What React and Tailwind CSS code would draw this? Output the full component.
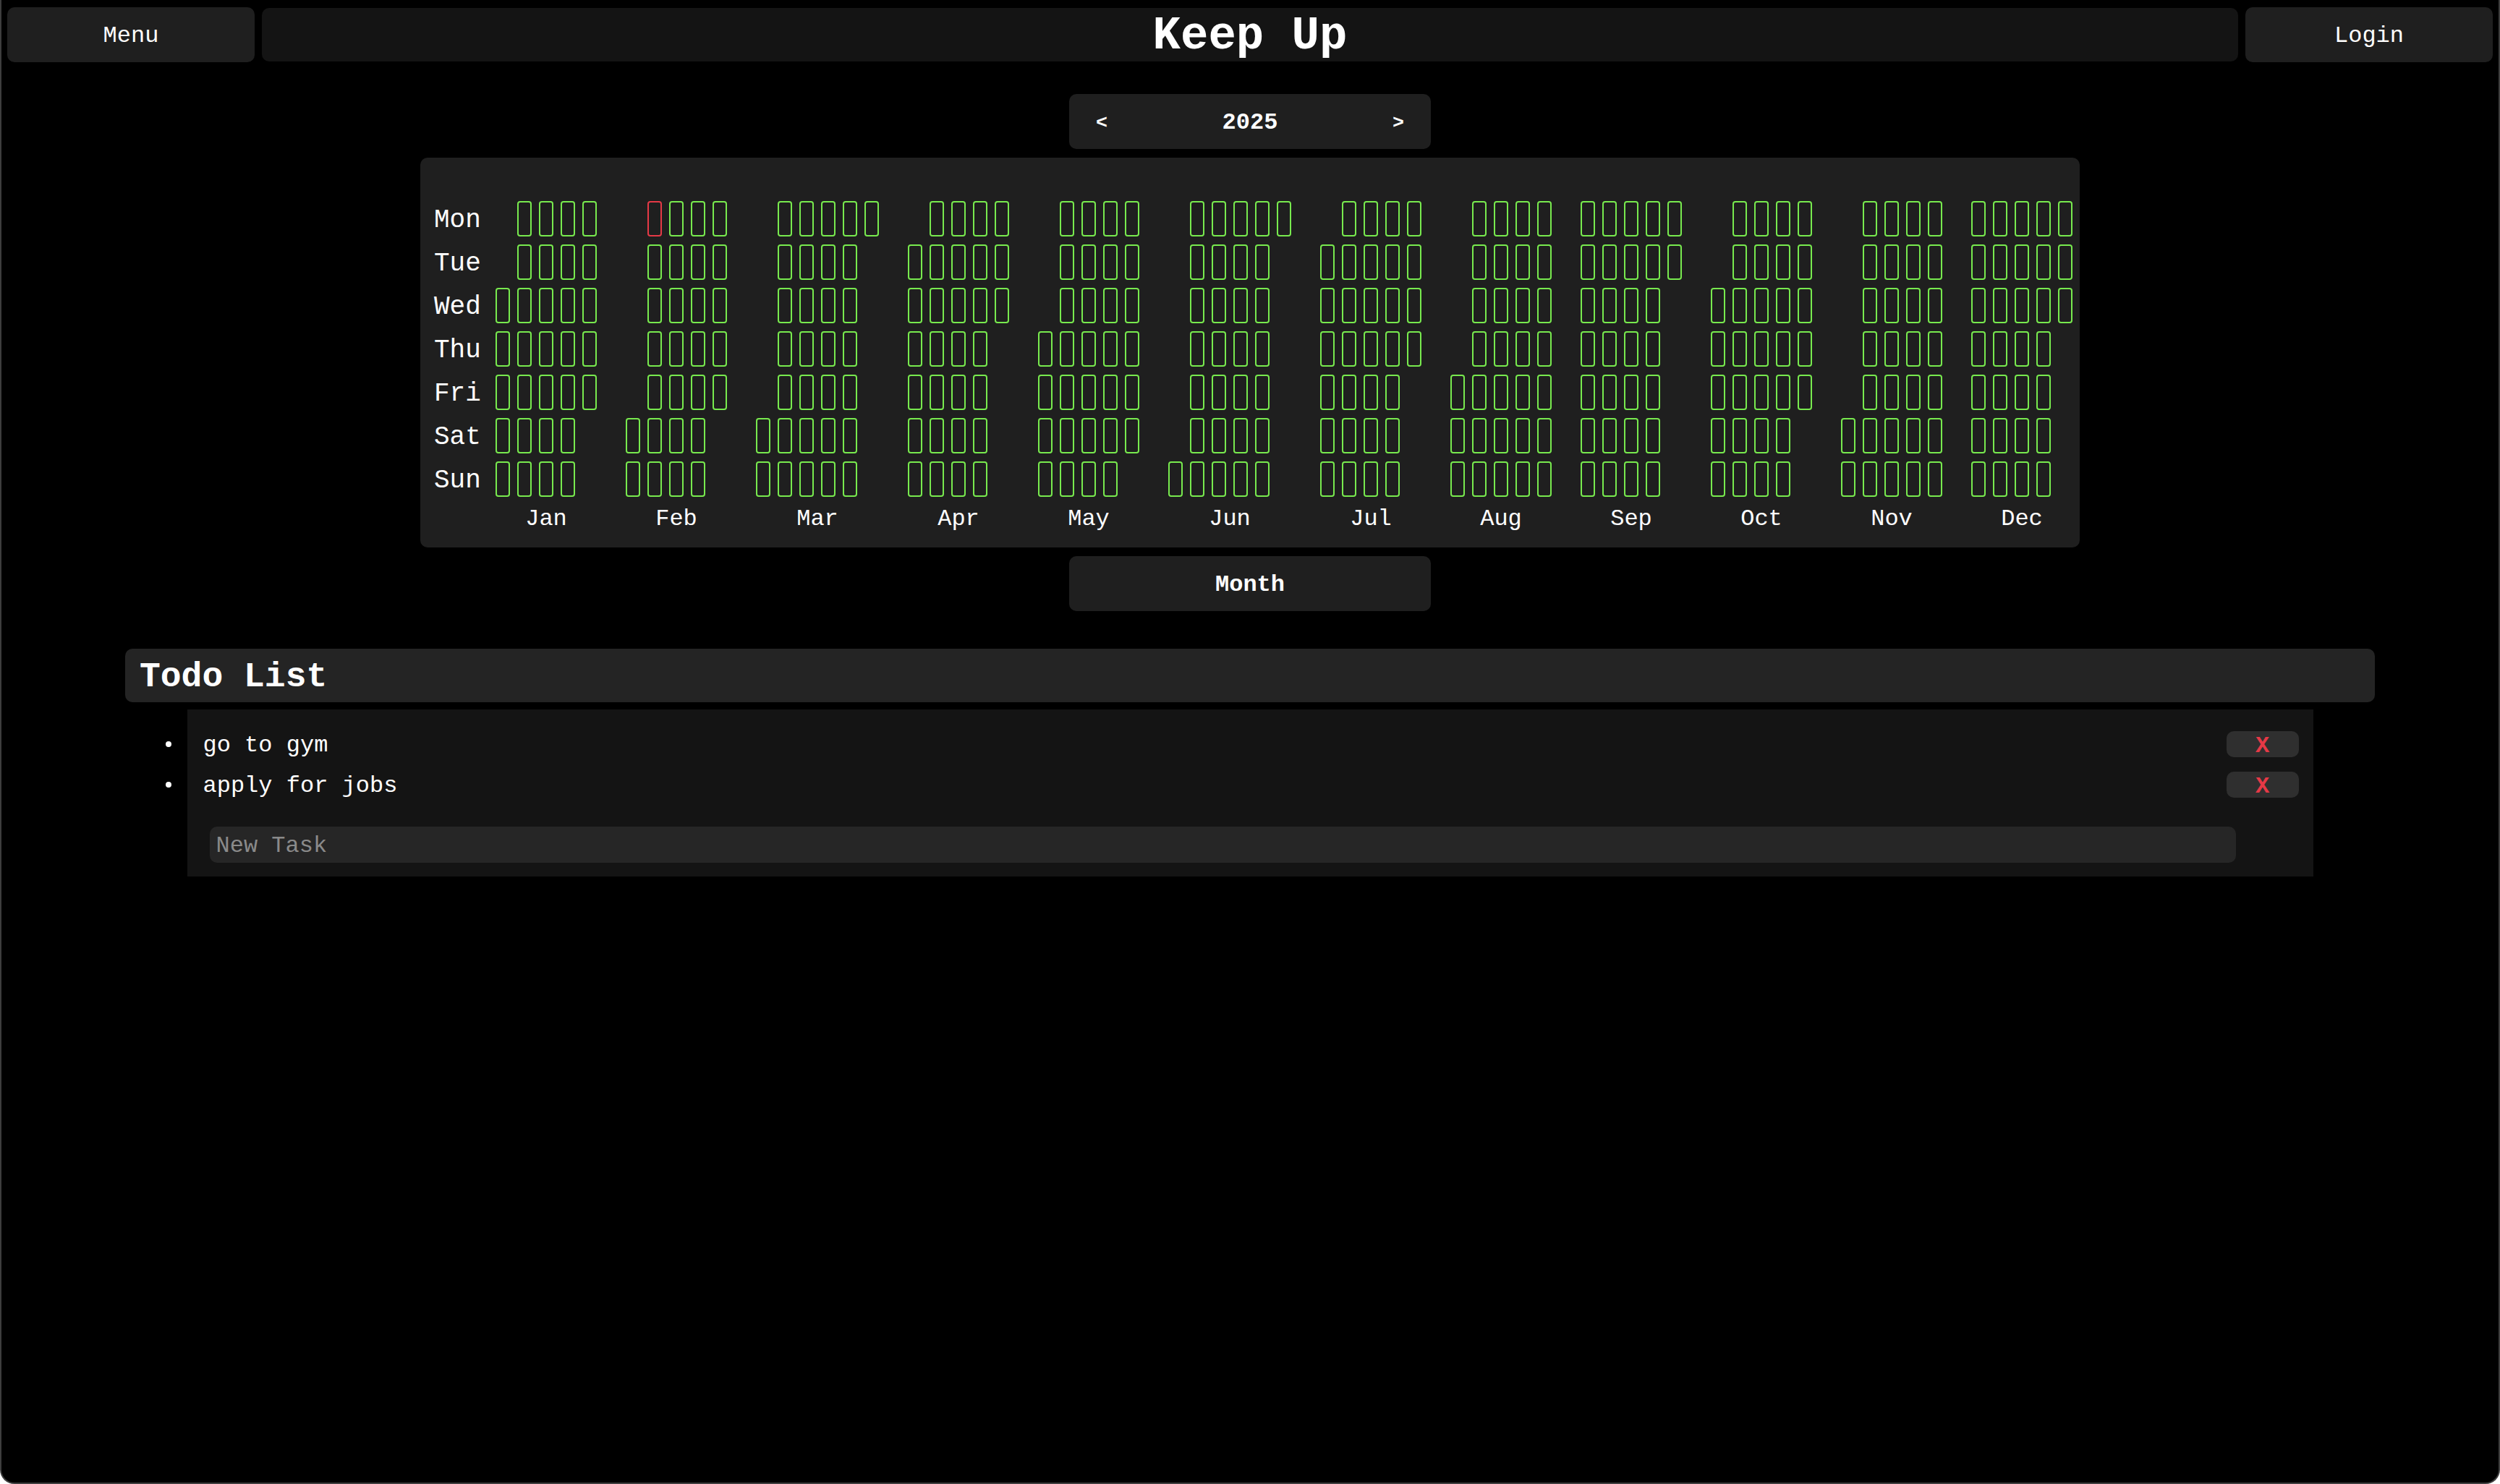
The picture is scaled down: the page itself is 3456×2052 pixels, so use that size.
import React from 'react';

const YEAR = 2025;
const MONTHS = ['Jan', 'Feb', 'Mar', 'Apr', 'May', 'Jun', 'Jul', 'Aug', 'Sep', 'Oct', 'Nov', 'Dec'];
const DAYS = ['Mon', 'Tue', 'Wed', 'Thu', 'Fri', 'Sat', 'Sun'];

// build week columns (monday first) for every month
const buildMonth = (m) => {
  const offset = (new Date(YEAR, m, 1).getDay() + 6) % 7;
  const days = new Date(YEAR, m + 1, 0).getDate();
  const cols = Math.ceil((offset + days) / 7);
  const out = [];
  for (let c = 0; c < cols; c++) {
    const col = [];
    for (let r = 0; r < 7; r++) {
      const day = c * 7 + r - offset + 1;
      col.push(day >= 1 && day <= days ? day : null);
    }
    out.push(col);
  }
  return out;
};

const Cell = ({ day, today }) => {
  if (!day) return <div className="w-[20px] h-[49px]"></div>;
  return (
    <div
      className={
        today
          ? 'w-[20px] h-[49px] rounded-[4px] border-2 border-[#e63946]'
          : 'w-[20px] h-[49px] rounded-[4px] border-2 border-[#78ea4e]'
      }
    ></div>
  );
};

const Month = ({ m }) => (
  <div className="flex flex-col">
    <div className="flex gap-x-[10px]">
      {buildMonth(m).map((col, ci) => (
        <div key={ci} className="flex flex-col gap-y-[11px]">
          {col.map((day, ri) => (
            <Cell key={ri} day={day} today={m === 1 && day === 3} />
          ))}
        </div>
      ))}
    </div>
    <div className="mt-[11px] pt-[2px] h-[36px] leading-[36px] text-center text-[32px]">{MONTHS[m]}</div>
  </div>
);

const TodoItem = ({ text }) => (
  <li className="flex items-center h-[36px]">
    <div className="-ml-[52px] mr-[44px] w-[8px] h-[8px] rounded-full bg-white shrink-0"></div>
    <span className="flex-1 pt-[3px] text-[32px] leading-[36px]">{text}</span>
    <button className="w-[100px] h-[36px] pt-[3px] rounded-[10px] bg-[#2f2f2f] text-[#e63946] font-bold text-[32px] leading-[36px]">
      X
    </button>
  </li>
);

export default function App() {
  return (
    <div className="h-[2052px] bg-black text-white font-['Liberation_Mono','Courier_New',monospace] border-x-2 border-b-2 border-[#3e3e3e] rounded-b-[20px] overflow-hidden">
      <header className="grid grid-cols-[342px_1fr_342px] gap-x-[10px] px-[8px] pt-[10px]">
        <button className="h-[76px] pt-[3px] rounded-[10px] bg-[#1f1f1f] text-[32px]">Menu</button>
        <div className="self-center h-[74px] pt-[3px] rounded-[10px] bg-[#141414] flex items-center justify-center">
          <h1 className="text-[64px] font-bold leading-[72px]">Keep Up</h1>
        </div>
        <button className="h-[76px] pt-[3px] rounded-[10px] bg-[#1f1f1f] text-[32px]">Login</button>
      </header>

      <div className="flex flex-col items-center">
        <div className="mt-[44px] w-[500px] h-[76px] pt-[3px] rounded-[10px] bg-[#1f1f1f] flex items-center justify-between px-[37px]">
          <button className="font-bold text-[26.67px]">&lt;</button>
          <span className="font-bold text-[32px]">{YEAR}</span>
          <button className="font-bold text-[26.67px]">&gt;</button>
        </div>

        <div className="mt-[12px] w-[2294px] rounded-[10px] bg-[#1f1f1f] pl-[19px] pr-[10px] pt-[60px] pb-[23px] flex gap-x-[19px]">
          <div className="w-[66px] flex flex-col gap-y-[11px]">
            {DAYS.map((d) => (
              <div key={d} className="h-[49px] pt-[4px] flex items-center text-[36px]">{d}</div>
            ))}
          </div>
          <div className="flex gap-x-[40px]">
            {MONTHS.map((_, m) => (
              <Month key={m} m={m} />
            ))}
          </div>
        </div>

        <button className="mt-[12px] w-[500px] h-[76px] pt-[3px] rounded-[10px] bg-[#1f1f1f] font-bold text-[32px]">
          Month
        </button>
      </div>

      <section className="mt-[52px]">
        <h2 className="mx-auto w-[3110px] h-[74px] pt-[3px] rounded-[10px] bg-[#242424] flex items-center pl-[20px] text-[48px] font-bold">
          Todo List
        </h2>
        <div className="mx-auto mt-[10px] w-[2939px] bg-[#141414] pl-[22px] pr-[20px] pt-[30px] pb-[19px]">
          <ul className="flex flex-col gap-y-[20px]">
            <TodoItem text="go to gym" />
            <TodoItem text="apply for jobs" />
          </ul>
          <input
            className="mt-[40px] ml-[9px] w-[2801px] h-[50px] rounded-[10px] bg-[#262626] pl-[9px] pt-[3px] text-[32px] text-white placeholder-[#8a8a8a] outline-none"
            placeholder="New Task"
          />
        </div>
      </section>
    </div>
  );
}
